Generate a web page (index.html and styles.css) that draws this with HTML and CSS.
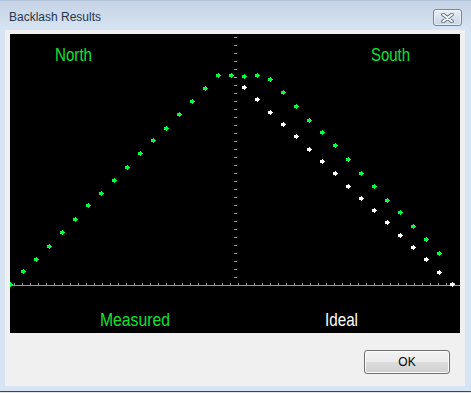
FILE: index.html
```html
<!DOCTYPE html>
<html>
<head>
<meta charset="utf-8">
<title>Backlash Results</title>
<link rel="stylesheet" href="styles.css">
</head>
<body>
<div class="window">
  <div class="titlebar">
    <span class="title">Backlash Results</span>
    <button class="close" aria-label="Close">
      <svg width="13" height="10" viewBox="0 0 13 10">
        <path d="M2 1.5 L11 8.5 M11 1.5 L2 8.5" stroke="#5a6b82" stroke-width="3.6" stroke-linecap="round"/>
        <path d="M2 1.5 L11 8.5 M11 1.5 L2 8.5" stroke="#ffffff" stroke-width="1.8" stroke-linecap="round"/>
      </svg>
    </button>
  </div>
  <div class="client">
    <div class="plot">
      <svg class="chart" width="450" height="299" viewBox="0 0 450 299" shape-rendering="crispEdges">
        <defs>
          <path id="m" d="M0,-2 H1 V-1 H2 V0 H3 V1 H2 V2 H1 V3 H0 V2 H-2 V-1 H0 Z"/>
          <pattern id="xticks" x="4" y="0" width="8" height="2" patternUnits="userSpaceOnUse">
            <rect x="0" y="0" width="1" height="2" fill="#a0a0a0"/>
          </pattern>
          <pattern id="ydash" x="0" y="3" width="3" height="8" patternUnits="userSpaceOnUse">
            <rect x="0" y="0" width="3" height="1" fill="#a0a0a0"/>
          </pattern>
        </defs>
        <rect x="224" y="3" width="3" height="241" fill="url(#ydash)"/>
        <rect x="0" y="251" width="450" height="1" fill="#9a9a9a"/>
        <rect x="4" y="249" width="441" height="2" fill="url(#xticks)"/>

        <g fill="#ffffff">
          <use href="#m" x="234" y="53"/><use href="#m" x="247" y="65"/><use href="#m" x="260" y="78"/>
          <use href="#m" x="273" y="90"/><use href="#m" x="286" y="102"/><use href="#m" x="299" y="115"/>
          <use href="#m" x="312" y="127"/><use href="#m" x="325" y="139"/><use href="#m" x="338" y="152"/>
          <use href="#m" x="351" y="164"/><use href="#m" x="364" y="176"/><use href="#m" x="377" y="188"/>
          <use href="#m" x="390" y="201"/><use href="#m" x="403" y="213"/><use href="#m" x="416" y="225"/>
          <use href="#m" x="429" y="238"/><use href="#m" x="442" y="250"/>
        </g>
        <g fill="#00ff40">
          <use href="#m" x="0" y="250"/><use href="#m" x="13" y="237"/><use href="#m" x="26" y="225"/>
          <use href="#m" x="39" y="212"/><use href="#m" x="52" y="198"/><use href="#m" x="65" y="185"/>
          <use href="#m" x="78" y="171"/><use href="#m" x="91" y="159"/><use href="#m" x="104" y="146"/>
          <use href="#m" x="117" y="133"/><use href="#m" x="130" y="119"/><use href="#m" x="143" y="106"/>
          <use href="#m" x="156" y="94"/><use href="#m" x="169" y="80"/><use href="#m" x="182" y="67"/>
          <use href="#m" x="195" y="54"/><use href="#m" x="208" y="41"/><use href="#m" x="221" y="41"/>
          <use href="#m" x="234" y="42"/><use href="#m" x="247" y="41"/><use href="#m" x="260" y="45"/>
          <use href="#m" x="273" y="58"/><use href="#m" x="286" y="72"/><use href="#m" x="299" y="86"/>
          <use href="#m" x="312" y="98"/><use href="#m" x="325" y="111"/><use href="#m" x="338" y="125"/>
          <use href="#m" x="351" y="139"/><use href="#m" x="364" y="152"/><use href="#m" x="377" y="166"/>
          <use href="#m" x="390" y="178"/><use href="#m" x="403" y="192"/><use href="#m" x="416" y="205"/>
          <use href="#m" x="429" y="219"/>
        </g>

        <g class="labels" shape-rendering="auto">
          <text class="lbl green" x="45" y="26.5" textLength="37" lengthAdjust="spacingAndGlyphs">North</text>
          <text class="lbl green" x="361" y="26.5" textLength="39" lengthAdjust="spacingAndGlyphs">South</text>
          <text class="lbl green" x="90" y="291.5" textLength="70" lengthAdjust="spacingAndGlyphs">Measured</text>
          <text class="lbl white" x="315" y="291.5" textLength="33" lengthAdjust="spacingAndGlyphs">Ideal</text>
        </g>
      </svg>
    </div>
    <div class="footer">
      <button class="ok">OK</button>
    </div>
  </div>
  <div class="bottomframe"></div>
</div>
</body>
</html>
```

FILE: styles.css
```css
html, body {
  margin: 0;
  padding: 0;
  background: #e4e4e4;
}

.window {
  width: 471px;
  height: 392px;
  box-sizing: border-box;
  display: flex;
  flex-direction: column;
  background: #d6e4f3;
  border-top: 1px solid #b4c4d8;
  border-bottom: 1px solid #3e4650;
}

.titlebar {
  height: 29px;
  flex: none;
  display: flex;
  align-items: flex-start;
  justify-content: space-between;
  background: linear-gradient(to bottom, #c5d4e6 0%, #cddbeb 50%, #d6e4f3 100%);
  padding-left: 9px;
  padding-right: 9px;
  box-sizing: border-box;
}

.title {
  font-family: "Liberation Sans", Arial, sans-serif;
  font-size: 12px;
  color: #26364a;
  margin-top: 9px;
  line-height: 14px;
}

.close {
  width: 29px;
  height: 17px;
  margin-top: 8px;
  padding: 0;
  border: 1px solid #7787a0;
  border-radius: 3px;
  background: linear-gradient(to bottom, #e9eff7 0%, #d7e2ef 50%, #c9d6e7 100%);
  display: flex;
  align-items: center;
  justify-content: center;
  box-shadow: inset 0 0 0 1px rgba(255, 255, 255, 0.5);
}

.close svg {
  display: block;
}

.client {
  height: 356px;
  flex: none;
  margin: 0 6px 0 5px;
  background: #f0f0f0;
  padding: 4px 5px 0 5px;
  box-sizing: border-box;
  display: flex;
  flex-direction: column;
}

.plot {
  width: 450px;
  height: 299px;
  background: #000000;
  flex: none;
}

.chart {
  display: block;
}

.lbl {
  font-family: "Liberation Sans", Arial, sans-serif;
  font-size: 19px;
}

.lbl.green {
  fill: #14e034;
}

.lbl.white {
  fill: #ffffff;
}

.footer {
  display: flex;
  justify-content: flex-end;
  padding-top: 17px;
  padding-right: 10px;
}

.ok {
  width: 86px;
  height: 24px;
  box-sizing: border-box;
  border: 1px solid #707070;
  border-radius: 3px;
  background: linear-gradient(to bottom, #f2f2f2 0%, #ebebeb 50%, #dddddd 51%, #cfcfcf 100%);
  box-shadow: inset 0 0 0 1px #fbfbfb;
  font-family: "Liberation Sans", Arial, sans-serif;
  font-size: 12px;
  color: #000000;
  padding: 0;
}

.bottomframe {
  flex: 1;
}
```
